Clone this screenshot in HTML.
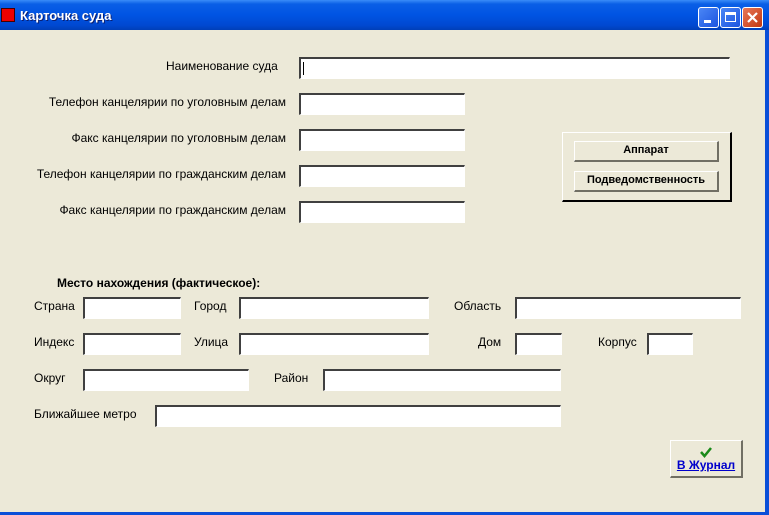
<!DOCTYPE html>
<html><head><meta charset="utf-8"><style>
*{margin:0;padding:0;box-sizing:border-box}
body{width:769px;height:515px;overflow:hidden;background:#ece9d8;font-family:"Liberation Sans",Arial,sans-serif;font-size:12px;color:#000;position:relative}
.tb{position:absolute;left:0;top:0;width:769px;height:30px;background:linear-gradient(#3a8cf8 0,#0a5fe6 4px,#0054e3 50%,#0048d0 85%,#003fb8 100%)}
.tt{position:absolute;left:20px;top:8px;color:#fff;font-weight:bold;font-size:13px;text-shadow:1px 1px 0 #0a1e70}
.ic{position:absolute;left:1px;top:8px;width:14px;height:14px;background:#e00;border:1px solid #400}
.wb{position:absolute;top:7px;width:21px;height:21px;border:1px solid #fff;border-radius:3px;background:linear-gradient(135deg,#4a86f5,#1c55e0)}
.wx{background:linear-gradient(135deg,#e8785a,#c2360f)}
.rb{position:absolute;right:0;top:30px;width:4px;height:485px;background:#0a4fd8}
.bb{position:absolute;left:0;bottom:0;width:769px;height:3px;background:#0a4fd8}
.l{position:absolute;white-space:nowrap;line-height:14px}
.r{text-align:right}
.i{position:absolute;background:#fff;border-top:2px solid #404040;border-left:2px solid #404040;border-right:1px solid #fff;border-bottom:1px solid #fff;height:22px}
.btn{position:absolute;background:#ece9d8;border-top:1px solid #fff;border-left:1px solid #fff;border-right:2px solid #716f64;border-bottom:2px solid #716f64;font-weight:bold;font-size:11px;text-align:center;line-height:17px}
</style></head><body>
<div class="tb"><div class="ic"></div><div class="tt">Карточка суда</div>
<div class="wb" style="left:698px"><div style="position:absolute;left:5px;top:12px;width:7px;height:3px;background:#fff"></div></div>
<div class="wb" style="left:720px"><div style="position:absolute;left:4px;top:4px;width:11px;height:10px;border:1px solid #fff;border-top-width:3px"></div></div>
<div class="wb wx" style="left:742px"><svg width="19" height="19" style="position:absolute;left:0;top:0"><path d="M5 5L14 14M14 5L5 14" stroke="#fff" stroke-width="2.2"/></svg></div>
</div>
<div class="rb"></div><div class="bb"></div>

<div class="l" style="left:166px;top:59px">Наименование суда</div>
<div class="i" style="left:299px;top:57px;width:431px"><div style="position:absolute;left:2px;top:3px;width:1px;height:13px;background:#000"></div></div>
<div class="l r" style="right:483px;top:95px">Телефон канцелярии по уголовным делам</div>
<div class="i" style="left:299px;top:93px;width:166px"></div>
<div class="l r" style="right:483px;top:131px">Факс канцелярии по уголовным делам</div>
<div class="i" style="left:299px;top:129px;width:166px"></div>
<div class="l r" style="right:483px;top:167px">Телефон канцелярии по гражданским делам</div>
<div class="i" style="left:299px;top:165px;width:166px"></div>
<div class="l r" style="right:483px;top:203px">Факс канцелярии по гражданским делам</div>
<div class="i" style="left:299px;top:201px;width:166px"></div>

<div style="position:absolute;left:562px;top:132px;width:170px;height:70px;border-top:1px solid #fff;border-left:1px solid #fff;border-right:2px solid #000;border-bottom:2px solid #000"></div>
<div class="btn" style="left:574px;top:141px;width:145px;height:21px">Аппарат</div>
<div class="btn" style="left:574px;top:171px;width:145px;height:21px">Подведомственность</div>

<div class="l" style="left:57px;top:276px;font-weight:bold">Место нахождения (фактическое):</div>
<div class="l" style="left:34px;top:299px">Страна</div>
<div class="i" style="left:83px;top:297px;width:98px"></div>
<div class="l" style="left:194px;top:299px">Город</div>
<div class="i" style="left:239px;top:297px;width:190px"></div>
<div class="l" style="left:454px;top:299px">Область</div>
<div class="i" style="left:515px;top:297px;width:226px"></div>

<div class="l" style="left:34px;top:335px">Индекс</div>
<div class="i" style="left:83px;top:333px;width:98px"></div>
<div class="l" style="left:194px;top:335px">Улица</div>
<div class="i" style="left:239px;top:333px;width:190px"></div>
<div class="l" style="left:478px;top:335px">Дом</div>
<div class="i" style="left:515px;top:333px;width:47px"></div>
<div class="l" style="left:598px;top:335px">Корпус</div>
<div class="i" style="left:647px;top:333px;width:46px"></div>

<div class="l" style="left:34px;top:371px">Округ</div>
<div class="i" style="left:83px;top:369px;width:166px"></div>
<div class="l" style="left:274px;top:371px">Район</div>
<div class="i" style="left:323px;top:369px;width:238px"></div>

<div class="l" style="left:34px;top:407px">Ближайшее метро</div>
<div class="i" style="left:155px;top:405px;width:406px"></div>

<div class="btn" style="left:670px;top:440px;width:73px;height:38px;line-height:14px">
<svg width="14" height="12" style="display:block;margin:5px auto 0"><path d="M2 6L5.5 10L12 2" stroke="#1a8a1a" stroke-width="2.5" fill="none"/></svg>
<span style="color:#0000cc;text-decoration:underline;font-size:12px">В Журнал</span></div>
</body></html>
